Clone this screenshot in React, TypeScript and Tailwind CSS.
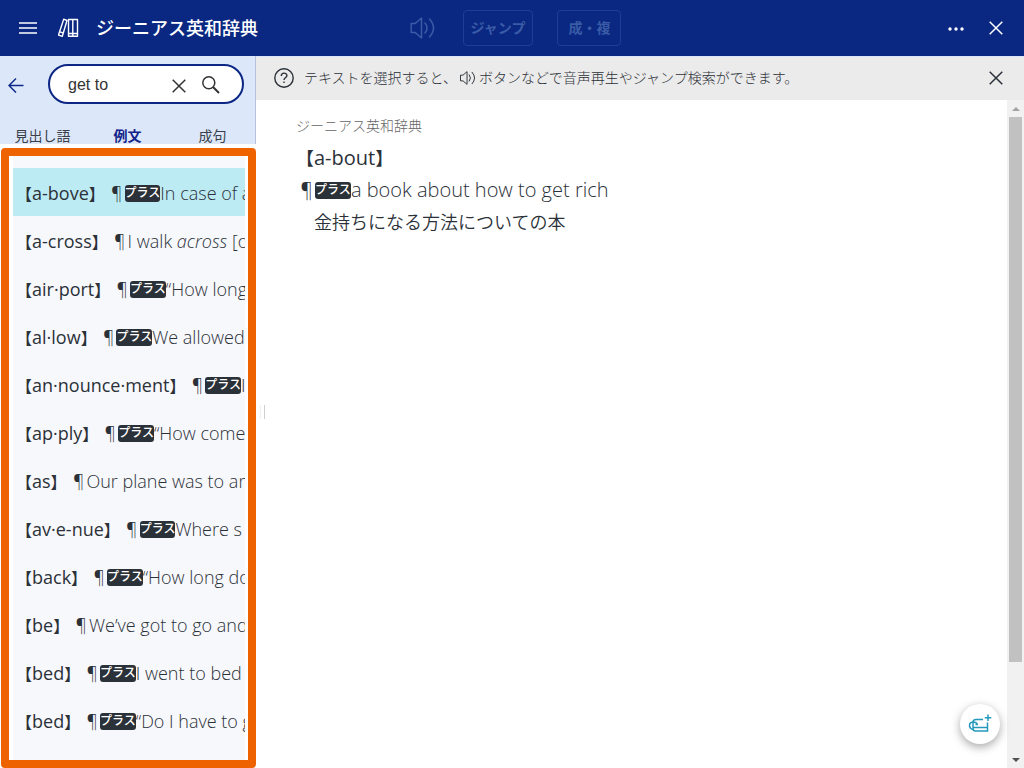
import { useState, type ReactNode } from "react"

type Entry = {
  id: number
  head: string
  plus?: boolean
  text: ReactNode
}

const entries: Entry[] = [
  { id: 1, head: "a-bove", plus: true, text: "In case of a" },
  { id: 2, head: "a-cross", text: <>I walk <i>across</i> [o</> },
  { id: 3, head: "air·port", plus: true, text: "“How long" },
  { id: 4, head: "al·low", plus: true, text: "We allowed" },
  { id: 5, head: "an·nounce·ment", plus: true, text: "I" },
  { id: 6, head: "ap·ply", plus: true, text: "“How come" },
  { id: 7, head: "as", text: "Our plane was to ar" },
  { id: 8, head: "av·e-nue", plus: true, text: "Where s" },
  { id: 9, head: "back", plus: true, text: "“How long do" },
  { id: 10, head: "be", text: "We’ve got to go and" },
  { id: 11, head: "bed", plus: true, text: "I went to bed" },
  { id: 12, head: "bed", plus: true, text: "“Do I have to g" },
]

const tabs = ["見出し語", "例文", "成句"]

function PlusBadge() {
  return (
    <span className="inline-flex h-[17px] items-center rounded-[3px] bg-[#2b3138] align-[3px] text-[12px] leading-none font-medium text-white">
      プラス
    </span>
  )
}

function CloseIcon({ className }: { className?: string }) {
  return (
    <svg viewBox="0 0 14 14" className={className} fill="none" stroke="currentColor" strokeWidth="1.5">
      <path d="M.7.7l12.6 12.6M13.3.7L.7 13.3" />
    </svg>
  )
}

function SpeakerIcon({ className }: { className?: string }) {
  return (
    <svg viewBox="0 0 26 22" className={className} fill="none" stroke="currentColor" strokeWidth="1.5" strokeLinejoin="round">
      <path d="M1.2 6.5h4L11.5 1v20l-6.300-5.500h-4z" />
      <path d="M15 6q4 5 0 10M19.500 2q8 9 0 18" strokeLinecap="round" />
    </svg>
  )
}

function Header() {
  return (
    <header className="grid h-14 shrink-0 grid-cols-[1fr_auto_1fr] items-center bg-[#0a2882] pr-3 pl-4 text-white">
      <div className="flex items-center">
        <button aria-label="メニュー" className="flex size-6 items-center justify-center">
          <svg viewBox="0 0 18 14" className="h-3.5 w-[18px]" stroke="currentColor" strokeWidth="1.4">
            <path d="M0 2h18M0 7h18M0 12h18" />
          </svg>
        </button>
        <svg viewBox="0 0 22 20" className="ml-[18px] h-5 w-[22px]" fill="none" stroke="currentColor" strokeWidth="1.4" strokeLinejoin="round">
          <path d="M10.500 1.500h4.300v16.800h-4.300zM14.800 1.500h4.700v16.800h-4.700zM10.500 15.500h4.300M14.800 15.500h4.700" />
          <path d="M5.700 1.200l3.300 1.300-4.700 15.800-3.800-1.300zM1.700 13.800l3.800 1.200" />
        </svg>
        <h1 className="ml-4 text-lg font-medium whitespace-nowrap">ジーニアス英和辞典</h1>
      </div>
      <div className="flex items-center gap-6 text-sm font-bold text-[#3a5ba5]">
        <button aria-label="音声" className="flex w-8 justify-center">
          <SpeakerIcon className="h-[22px] w-[26px]" />
        </button>
        <button className="h-9 rounded border border-[#1c3f95] px-[7px]">ジャンプ</button>
        <button className="h-9 min-w-16 rounded border border-[#1c3f95] px-[7px]">成・複</button>
      </div>
      <div className="flex items-center justify-end gap-3">
        <button aria-label="その他" className="flex size-6 items-center justify-center">
          <svg viewBox="0 0 16 4" className="mt-0.5 h-1 w-4" fill="currentColor">
            <circle cx="2" cy="2" r="1.700" />
            <circle cx="8" cy="2" r="1.700" />
            <circle cx="14" cy="2" r="1.700" />
          </svg>
        </button>
        <button aria-label="閉じる" className="flex size-8 items-center justify-center">
          <CloseIcon className="size-3.5" />
        </button>
      </div>
    </header>
  )
}

function Sidebar() {
  const [query, setQuery] = useState("get to")
  const [tab, setTab] = useState("例文")
  const [selected, setSelected] = useState(1)

  return (
    <aside className="flex w-64 shrink-0 flex-col">
      <div className="flex h-[88px] shrink-0 flex-col justify-between border-r border-[#b9bfdd] bg-[#dce7f9]">
        <div className="flex items-center pt-2 pr-[11px] pl-2">
          <button aria-label="戻る" className="mt-0.5 text-[#0f2a8a]">
            <svg viewBox="0 0 16 16" className="size-4" fill="none" stroke="currentColor" strokeWidth="1.500">
              <path d="M15.500 8.500H1.500M8 1.500l-7 7 7 7" />
            </svg>
          </button>
          <div className="ml-6 flex h-10 min-w-0 flex-1 items-center rounded-full border-2 border-[#0b2685] bg-white pt-0.5 pr-[22px] pl-[18px] text-[#333]">
            <input
              aria-label="検索"
              value={query}
              onChange={(e) => setQuery(e.target.value)}
              className="min-w-0 flex-1 font-['Liberation_Sans',sans-serif] text-base outline-none"
            />
            <button aria-label="クリア" className="mt-0.5 mr-4" onClick={() => setQuery("")}>
              <CloseIcon className="size-3.5" />
            </button>
            <button aria-label="検索する">
              <svg viewBox="0 0 18 18" className="size-[18px]" fill="none" stroke="currentColor">
                <circle cx="6.800" cy="6.800" r="6" strokeWidth="1.500" />
                <path d="M11 11l6 6" strokeWidth="2" />
              </svg>
            </button>
          </div>
        </div>
        <div role="tablist" className="flex text-sm leading-4">
          {tabs.map((t) => (
            <button
              key={t}
              role="tab"
              aria-selected={t === tab}
              onClick={() => setTab(t)}
              className={`flex-1 ${t === tab ? "font-bold text-[#14248a]" : "text-[#3a3f4a]"}`}
            >
              {t}
            </button>
          ))}
        </div>
      </div>

      <div className="mt-1 ml-px flex min-h-0 flex-1 rounded border-8 border-[#ee6300] pr-[3px] pl-1">
        <ul className="min-w-0 flex-1 overflow-hidden bg-[#f7f8fc] pt-3">
          {entries.map((e) => (
            <li key={e.id}>
              <button
                onClick={() => setSelected(e.id)}
                className={`flex h-12 w-full items-center overflow-hidden pt-0.5 pl-[3px] text-left text-lg whitespace-nowrap text-[#2b3138] ${
                  e.id === selected ? "bg-[#bdebf4]" : ""
                }`}
              >
                <span className="font-medium">
                  <span className="text-base">【</span>
                  {e.head}
                  <span className="text-base">】</span>
                </span>
                <span className="ml-1.5 font-light">
                  <span className="mr-0.5">¶</span>
                  {e.plus && <PlusBadge />}
                  {e.text}
                </span>
              </button>
            </li>
          ))}
        </ul>
      </div>
    </aside>
  )
}

function Scrollbar() {
  return (
    <div className="flex w-[17px] shrink-0 flex-col items-center bg-[#f1f1f1]">
      <div className="flex h-[17px] items-center">
        <svg viewBox="0 0 8 4" className="h-1 w-2" fill="#a3a3a3">
          <path d="M0 4l4-4 4 4z" />
        </svg>
      </div>
      <div className="flex w-[13px] flex-1 flex-col">
        <div className="h-[86%] bg-[#c1c1c1]" />
      </div>
      <div className="flex h-[17px] items-center">
        <svg viewBox="0 0 8 4" className="h-1 w-2" fill="#505050">
          <path d="M0 0l4 4 4-4z" />
        </svg>
      </div>
    </div>
  )
}

export default function App() {
  const [showHint, setShowHint] = useState(true)

  return (
    <div className="flex h-screen flex-col overflow-hidden bg-white font-['Open_Sans','Noto_Sans_CJK_JP',sans-serif] text-[#2b3138]">
      <Header />
      <div className="flex min-h-0 flex-1">
        <Sidebar />
        <main className="relative flex min-w-0 flex-1 flex-col">
          {showHint && (
            <div className="flex h-11 shrink-0 items-center border-t border-[#d8e5f7] bg-[#ebebeb] pr-3 pb-0.5 pl-[18px] text-sm">
              <svg viewBox="0 0 20 20" className="mr-2.5 size-5" fill="none" stroke="currentColor" strokeWidth="1.400">
                <circle cx="10" cy="10" r="9.200" />
                <path d="M7.300 8c0-3.900 5.600-3.700 5.600-.4 0 2.200-2.900 2.100-2.900 4.400M10 13.400v1.600" />
              </svg>
              <p className="flex flex-1 items-center font-light whitespace-nowrap">
                テキストを選択すると、
                <SpeakerIcon className="mx-0.5 h-3.5 w-[18px]" />
                ボタンなどで音声再生やジャンプ検索ができます。
              </p>
              <button aria-label="ヒントを閉じる" onClick={() => setShowHint(false)} className="flex size-8 items-center justify-center">
                <CloseIcon className="size-3.5" />
              </button>
            </div>
          )}
          <div className="flex min-h-0 flex-1">
            <article className="min-w-0 flex-1 overflow-hidden px-10 pt-4 text-lg leading-8">
              <p className="text-sm leading-5 font-light text-[#666]">ジーニアス英和辞典</p>
              <h2 className="mt-1.5 text-xl leading-8 font-medium">
                <span className="text-lg leading-8">【</span>
                a-bout
                <span className="text-lg leading-8">】</span>
              </h2>
              <p className="pl-1 text-xl leading-8 font-light">
                <span className="mr-0.5">¶</span>
                <PlusBadge />a book about how to get rich
              </p>
              <p className="pl-[18px] font-[350]">金持ちになる方法についての本</p>
            </article>
            <Scrollbar />
          </div>
          <div className="absolute top-1/2 left-1 h-3.5 w-[5px] -translate-y-1/2 border-x border-[#d0d0d0] border-l-[#f0f0f0]" />
          <button
            aria-label="単語帳に追加"
            className="absolute right-6 bottom-6 flex size-10 items-center justify-center rounded-full bg-white text-[#2499bd] shadow-[0_3px_10px_rgba(0,0,0,0.35)]"
          >
            <svg viewBox="0 0 24 20" className="h-5 w-6" fill="none" stroke="currentColor" strokeWidth="1.500">
              <path d="M15 5.500H8q-3 0-3 3v6q0 2.500 2.500 2.500H19.500V8.500M5 13.500H19.500" />
              <path d="M9.500 10.500q-1-2.500-4.500-2.500Q1.500 8.500 1.500 11.500t3.500 4M7.500 10.500h2.500" />
              <path d="M20 .5v6.500M16.800 3.700h6.500" />
            </svg>
          </button>
        </main>
      </div>
    </div>
  )
}
